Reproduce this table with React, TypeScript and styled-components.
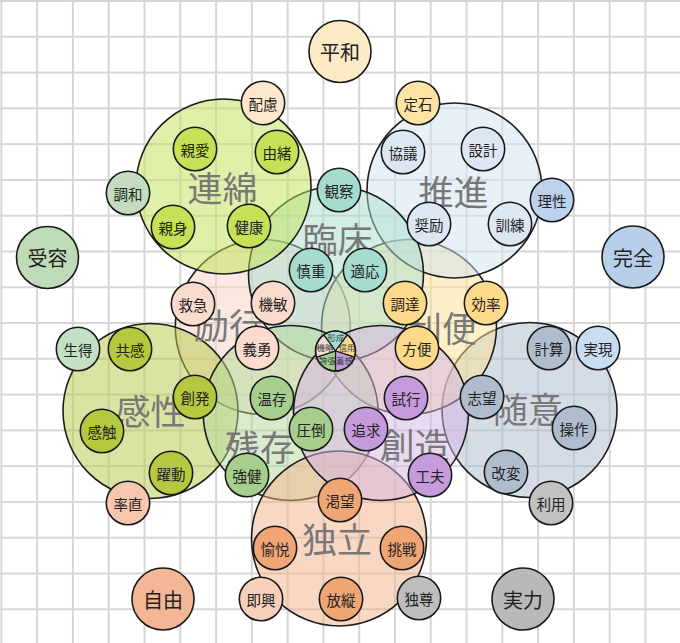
import React from 'react';
import styled, { createGlobalStyle } from 'styled-components';

const GlobalStyle = createGlobalStyle`
  html, body { margin: 0; padding: 0; background: #ffffff; }
  body { font-family: "Noto Sans CJK JP", "Noto Sans", sans-serif; }
`;

const Canvas = styled.div`
  width: 680px;
  height: 643px;
  overflow: hidden;
  background-color: #ffffff;
  background-image:
    linear-gradient(to right, #d6d6d6 1.6px, transparent 1.6px),
    linear-gradient(to bottom, #d6d6d6 1.6px, transparent 1.6px);
  background-size: 35.79px 35.79px;
  background-position: 0.4px 0;
`;

const Diagram = styled.svg`
  display: block;
  width: 680px;
  height: 643px;
`;

const Region = styled.circle<{ $fill: string }>`
  fill: ${(p) => p.$fill};
  fill-opacity: 0.5;
  stroke: #1e1e1e;
  stroke-width: 1.6;
`;

const RegionLabel = styled.text`
  font-family: "Noto Sans CJK JP", "Noto Sans", sans-serif;
  font-size: 35px;
  fill: #787878;
  text-anchor: middle;
  dominant-baseline: central;
`;

const Node = styled.circle<{ $fill: string }>`
  fill: ${(p) => p.$fill};
  stroke: #1a1a1a;
  stroke-width: 1.6;
`;

const NodeLabel = styled.text<{ $size: number }>`
  font-family: "Noto Sans CJK JP", "Noto Sans", sans-serif;
  font-size: ${(p) => p.$size}px;
  fill: #222222;
  text-anchor: middle;
  dominant-baseline: central;
`;

const Slice = styled.path<{ $fill: string }>`
  fill: ${(p) => p.$fill};
  stroke: #1a1a1a;
  stroke-width: 1.2;
`;

const Hub = styled.circle`
  fill: none;
  stroke: #1a1a1a;
  stroke-width: 1.6;
`;

const SliceLabel = styled.text`
  font-family: "Noto Sans CJK JP", "Noto Sans", sans-serif;
  font-size: 8.5px;
  fill: #2e3a40;
  text-anchor: middle;
  dominant-baseline: central;
`;

type RegionDef = { name: string; x: number; y: number; lx: number; ly: number; color: string };
type NodeDef = { name: string; x: number; y: number; color: string; r?: number; size?: number };

const R = 87.5;

const regions: RegionDef[] = [
  { name: '随意', x: 529.5, y: 410, lx: 528, ly: 407, color: '#abb9cd' },
  { name: '励行', x: 262.8, y: 327, lx: 229, ly: 323.5, color: '#f7d3c3' },
  { name: '利便', x: 409, y: 327, lx: 442, ly: 326, color: '#fbe191' },
  { name: '推進', x: 454.5, y: 190.5, lx: 453.5, ly: 190, color: '#d1e1f1' },
  { name: '臨床', x: 336, y: 274, lx: 337.5, ly: 237.5, color: '#a9ddcd' },
  { name: '感性', x: 150.5, y: 411, lx: 150.5, ly: 409, color: '#b7c745' },
  { name: '残存', x: 290.7, y: 413, lx: 260, ly: 445, color: '#b1d99b' },
  { name: '独立', x: 339, y: 538.5, lx: 337, ly: 537, color: '#f3b187' },
  { name: '創造', x: 381, y: 413, lx: 414.5, ly: 443, color: '#d5b3e5' },
  { name: '連綿', x: 223.5, y: 186.5, lx: 222.5, ly: 186, color: '#bfe151' },
];

const C = {
  renmen: '#c5e156',
  suishin: '#dce7f3',
  rinsho: '#a6dccf',
  riben: '#fdd98a',
  sozo: '#c59bdc',
  zanson: '#a6cf8e',
  reiko: '#fadcce',
  kansei: '#b6c83e',
  zuii: '#afbccd',
  dokuritsu: '#f0a575',
};

const nodes: NodeDef[] = [
  { name: '親愛', x: 195, y: 149, color: C.renmen },
  { name: '由緒', x: 277, y: 152, color: C.renmen },
  { name: '親身', x: 173, y: 227, color: C.renmen },
  { name: '健康', x: 249, y: 226, color: C.renmen },
  { name: '協議', x: 403, y: 152, color: C.suishin },
  { name: '設計', x: 483, y: 149, color: C.suishin },
  { name: '奨励', x: 429, y: 224, color: C.suishin },
  { name: '訓練', x: 510, y: 224, color: C.suishin },
  { name: '観察', x: 339, y: 190, color: C.rinsho },
  { name: '慎重', x: 311, y: 270, color: C.rinsho },
  { name: '適応', x: 365, y: 270, color: C.rinsho },
  { name: '調達', x: 405, y: 303, color: C.riben },
  { name: '効率', x: 486, y: 303, color: C.riben },
  { name: '方便', x: 417, y: 348, color: C.riben },
  { name: '試行', x: 406, y: 398, color: C.sozo },
  { name: '追求', x: 366, y: 429, color: C.sozo },
  { name: '工夫', x: 430, y: 475, color: C.sozo },
  { name: '温存', x: 272, y: 398, color: C.zanson },
  { name: '圧倒', x: 311, y: 429, color: C.zanson },
  { name: '強健', x: 247, y: 475, color: C.zanson },
  { name: '救急', x: 193, y: 304, color: C.reiko },
  { name: '機敏', x: 273, y: 303, color: C.reiko },
  { name: '義勇', x: 257, y: 348, color: C.reiko },
  { name: '共感', x: 130, y: 349, color: C.kansei },
  { name: '創発', x: 195, y: 397, color: C.kansei },
  { name: '感触', x: 102, y: 431, color: C.kansei },
  { name: '躍動', x: 171, y: 473, color: C.kansei },
  { name: '計算', x: 549, y: 348, color: C.zuii },
  { name: '志望', x: 482, y: 397, color: C.zuii },
  { name: '操作', x: 574, y: 428, color: C.zuii },
  { name: '改変', x: 506, y: 472, color: C.zuii },
  { name: '渇望', x: 340, y: 500, color: C.dokuritsu },
  { name: '愉悦', x: 275, y: 548, color: C.dokuritsu },
  { name: '挑戦', x: 402, y: 548, color: C.dokuritsu },
  { name: '放縦', x: 341, y: 599, color: C.dokuritsu },
  { name: '配慮', x: 263, y: 103, color: '#fde8cd' },
  { name: '定石', x: 418, y: 103, color: '#fde3a4' },
  { name: '調和', x: 128, y: 193, color: '#c3dcbd' },
  { name: '理性', x: 552, y: 200, color: '#bcd2ea' },
  { name: '生得', x: 78, y: 349, color: '#c3e0c3' },
  { name: '実現', x: 598, y: 348, color: '#c9ddf2' },
  { name: '率直', x: 128, y: 503, color: '#f7c7ae' },
  { name: '利用', x: 551, y: 503, color: '#c2c2c2' },
  { name: '即興', x: 261, y: 599, color: '#f8cfba' },
  { name: '独尊', x: 419, y: 598, color: '#bdbdbd' },
  { name: '平和', x: 340, y: 51.5, color: '#fdebc8', r: 31, size: 20 },
  { name: '受容', x: 47.5, y: 257.5, color: '#bfdab6', r: 31, size: 20 },
  { name: '完全', x: 633, y: 257, color: '#b7cfe9', r: 31, size: 20 },
  { name: '自由', x: 163, y: 599, color: '#f4b795', r: 31, size: 20 },
  { name: '実力', x: 523, y: 599, color: '#b9b9b9', r: 31, size: 20 },
];

const HUB = { x: 335.5, y: 351, r: 20 };

const slices = [
  { name: '形成', from: -126, to: -54, color: C.rinsho, lx: 335.7, ly: 337 },
  { name: '信用', from: -54, to: 18, color: C.riben, lx: 347, ly: 346.5 },
  { name: '着想', from: 18, to: 90, color: C.sozo, lx: 344.5, ly: 360 },
  { name: '誇張', from: 90, to: 162, color: C.zanson, lx: 327.5, ly: 360 },
  { name: '機略', from: 162, to: 234, color: C.reiko, lx: 325, ly: 347 },
];

const pt = (deg: number) => {
  const a = (deg * Math.PI) / 180;
  return [HUB.x + HUB.r * Math.cos(a), HUB.y + HUB.r * Math.sin(a)];
};

const slicePath = (from: number, to: number) => {
  const [x1, y1] = pt(from);
  const [x2, y2] = pt(to);
  return `M ${HUB.x} ${HUB.y} L ${x1.toFixed(2)} ${y1.toFixed(2)} A ${HUB.r} ${HUB.r} 0 0 1 ${x2.toFixed(2)} ${y2.toFixed(2)} Z`;
};

export default function App() {
  return (
    <>
      <GlobalStyle />
      <Canvas>
        <Diagram viewBox="0 0 680 643" xmlns="http://www.w3.org/2000/svg">
          <g>
            {regions.map((r) => (
              <Region key={r.name} cx={r.x} cy={r.y} r={R} $fill={r.color} />
            ))}
          </g>
          <g>
            {regions.map((r) => (
              <RegionLabel key={r.name} x={r.lx} y={r.ly}>
                {r.name}
              </RegionLabel>
            ))}
          </g>
          <g>
            {slices.map((s) => (
              <Slice key={s.name} d={slicePath(s.from, s.to)} $fill={s.color} />
            ))}
            <Hub cx={HUB.x} cy={HUB.y} r={HUB.r} />
            {slices.map((s) => (
              <SliceLabel key={s.name} x={s.lx} y={s.ly}>
                {s.name}
              </SliceLabel>
            ))}
          </g>
          <g>
            {nodes.map((n) => (
              <g key={n.name}>
                <Node cx={n.x} cy={n.y} r={n.r ?? 21.7} $fill={n.color} />
                <NodeLabel x={n.x} y={n.y} $size={n.size ?? 14.5}>
                  {n.name}
                </NodeLabel>
              </g>
            ))}
          </g>
        </Diagram>
      </Canvas>
    </>
  );
}
